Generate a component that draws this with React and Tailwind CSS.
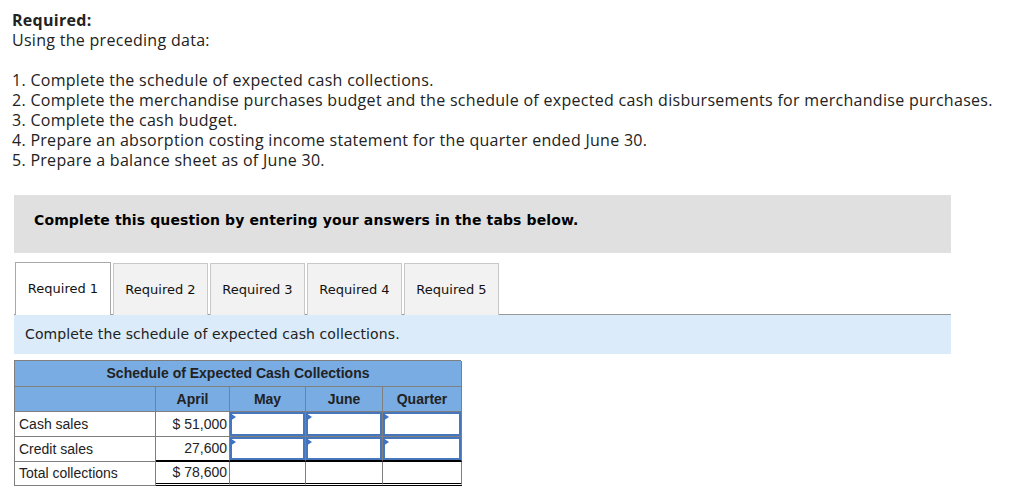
import React from 'react';

const tabs = ['Required 1', 'Required 2', 'Required 3', 'Required 4', 'Required 5'];

const cell = 'border-r border-b border-[#7f7f7f]';

const InputCell = ({ last }) => (
    <div className={`border-r ${last ? 'border-b-2 border-b-black' : 'border-b'} border-[#7f7f7f] h-[25px] p-0`}>
        <div className="relative h-full border-2 border-[#4677bd] bg-white">
            <span className="absolute -left-[2px] -top-[1px] w-0 h-0 border-t-[4px] border-b-[4px] border-l-[6px] border-t-transparent border-b-transparent border-l-[#3f73bf]" />
        </div>
    </div>
);

const App = () => {
    return (
        <div className="bg-white w-[1014px] h-[496px] overflow-hidden pt-[10px]">
            {/* Texto del enunciado */}
            <div className="pl-[12px] text-[16px] leading-[20px] tracking-[0.29px] text-[#222] font-['Open_Sans',sans-serif]">
                <p className="font-bold">Required:</p>
                <p>Using the preceding data:</p>
                <p>&nbsp;</p>
                <p>1. Complete the schedule of expected cash collections.</p>
                <p>2. Complete the merchandise purchases budget and the schedule of expected cash disbursements for merchandise purchases.</p>
                <p>3. Complete the cash budget.</p>
                <p>4. Prepare an absorption costing income statement for the quarter ended June 30.</p>
                <p>5. Prepare a balance sheet as of June 30.</p>
            </div>

            <div className="ml-[14px] w-[937px] mt-[25px] font-['DejaVu_Sans',Verdana,sans-serif]">
                {/* Caja gris */}
                <div className="bg-[#e0e0e0] h-[58px] flex items-center pl-[20px] pb-[7px]">
                    <span className="font-bold text-[14px] tracking-[0.12px] text-black">Complete this question by entering your answers in the tabs below.</span>
                </div>

                {/* Tabs */}
                <div className="mt-[9px] flex items-end border-b border-[#999] pl-px gap-[2px]">
                    {tabs.map((t, i) => (
                        <div
                            key={t}
                            className={`w-[95px] flex items-center justify-center text-[13px] text-[#111] border border-b-0 -mb-px ${i === 0 ? 'bg-white border-[#a8a8a8] h-[53px] w-[96px]' : 'bg-[#f2f2f2] border-[#c8c8c8] h-[52px]'}`}
                        >
                            {t}
                        </div>
                    ))}
                </div>

                {/* Caja azul */}
                <div className="bg-[#dbebf9] h-[39px] flex items-center pl-[11px] text-[14px] tracking-[0.1px] text-[#222]">
                    Complete the schedule of expected cash collections.
                </div>
            </div>

            {/* Tabla */}
            <div className="ml-[14px] mt-[6px] w-[447px] grid grid-cols-[141px_74px_76px_77px_79px] border-l border-t border-[#7f7f7f] text-[14px] text-[#222] font-['Liberation_Sans',Arial,sans-serif]">
                <div className={`col-span-5 ${cell} bg-[#78ace3] h-[26px] flex items-center justify-center font-bold`}>
                    Schedule of Expected Cash Collections
                </div>
                <div className={`${cell} bg-[#78ace3] h-[25px]`}></div>
                {['April', 'May', 'June', 'Quarter'].map((m) => (
                    <div key={m} className={`${cell} bg-[#78ace3] h-[25px] flex items-center justify-center font-bold`}>{m}</div>
                ))}

                <div className={`${cell} h-[25px] flex items-center px-[4px]`}>Cash sales</div>
                <div className={`${cell} h-[25px] flex items-center justify-end px-[2px]`}>$ 51,000</div>
                <InputCell />
                <InputCell />
                <InputCell />

                <div className={`${cell} h-[25px] flex items-center px-[4px]`}>Credit sales</div>
                <div className="border-r border-[#7f7f7f] border-b-2 border-b-black h-[25px] flex items-center justify-end px-[2px]">27,600</div>
                <InputCell last />
                <InputCell last />
                <InputCell last />

                <div className={`${cell} h-[24px] flex items-center px-[4px]`}>Total collections</div>
                {['$ 78,600', '', '', ''].map((v, i) => (
                    <div key={i} className="border-r border-[#7f7f7f] border-b-[3px] border-double border-b-black h-[24px] flex items-center justify-end px-[2px]">{v}</div>
                ))}
            </div>
        </div>
    );
};

export default App;
